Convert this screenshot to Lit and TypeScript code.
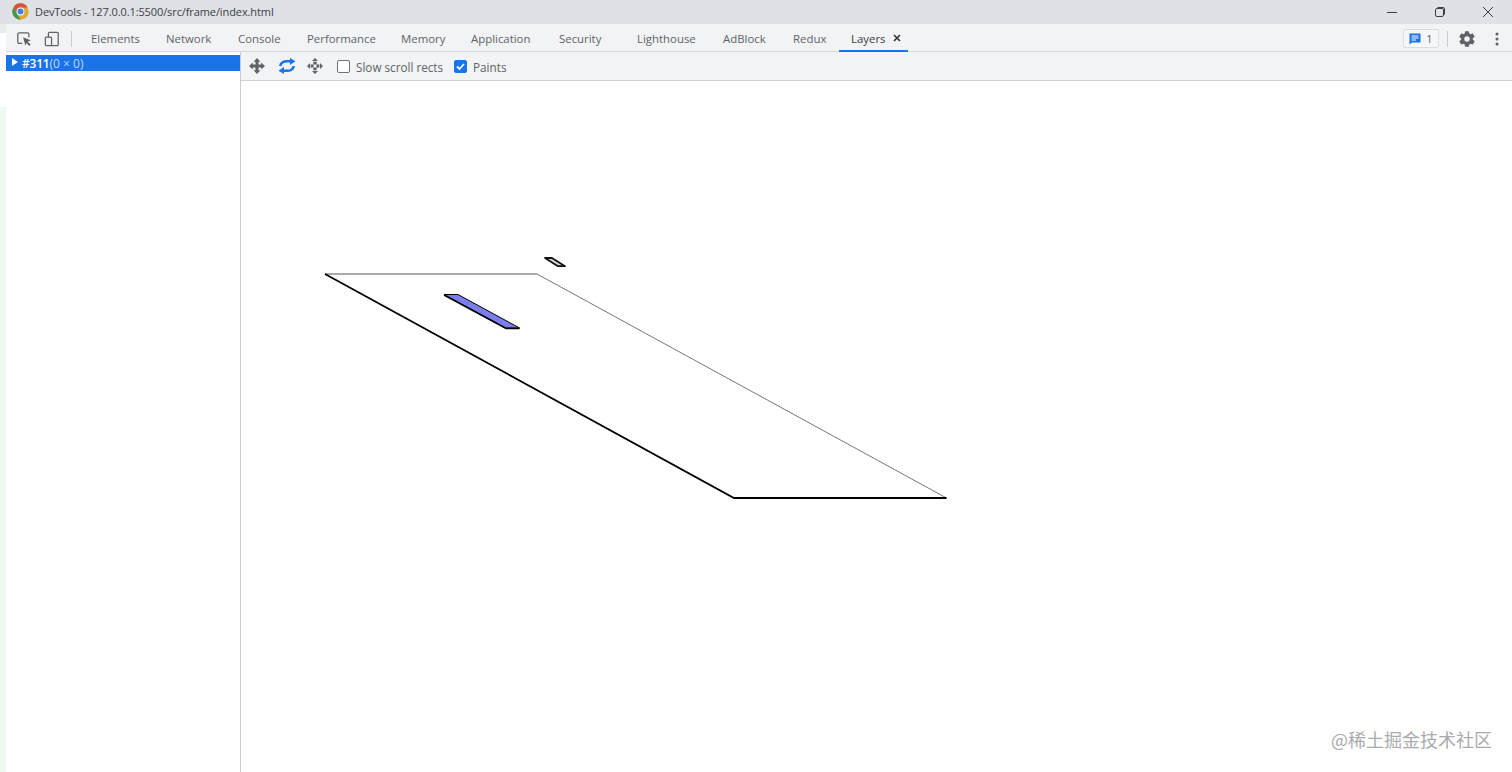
import { LitElement, html, css } from "lit";
import { customElement } from "lit/decorators.js";

type Tab = { label: string; width: number };
const TABS: Tab[] = [
  { label: "Elements", width: 75 },
  { label: "Network", width: 72 },
  { label: "Console", width: 69 },
  { label: "Performance", width: 94 },
  { label: "Memory", width: 70 },
  { label: "Application", width: 88 },
  { label: "Security", width: 78 },
  { label: "Lighthouse", width: 86 },
  { label: "AdBlock", width: 70 },
  { label: "Redux", width: 46 },
];

@customElement("app-root")
export class AppRoot extends LitElement {
  static styles = css`
    :host {
      display: block;
      width: 1512px;
      height: 772px;
      overflow: hidden;
      background: #fff;
      font-family: "Open Sans", "Noto Sans", "Liberation Sans", sans-serif;
      color: #5f6368;
      position: relative;
    }
    .title {
      height: 24px;
      background: #dee1e6;
      display: flex;
      align-items: center;
      padding-left: 12px;
      padding-bottom: 1px;
      box-sizing: border-box;
      color: #3c4043;
      font-size: 11px;
      letter-spacing: -0.1px;
    }
    .title svg.chrome { margin-right: 6px; }
    .title span { flex: 1; }
    .win { display: flex; width: 144px; height: 22px; align-items: center; }
    .win div { width: 48px; display: flex; justify-content: center; }
    .body { display: flex; height: 748px; }
    .strip { width: 6px; flex: none; display: flex; flex-direction: column; }
    .strip .a { height: 9px; background: #eaebec; }
    .strip .b { height: 74px; background: #fff; }
    .strip .c { flex: 1; background: #edfaed; }
    .main { flex: 1; display: flex; flex-direction: column; min-width: 0; }
    .tabbar {
      height: 28px;
      background: #f1f3f4;
      border-bottom: 1px solid #d6d8db;
      box-sizing: border-box;
      display: flex;
      align-items: center;
      font-size: 11.4px;
    }
    .tools { display: flex; align-items: center; width: 85px; flex: none; padding: 2px 0 0 10px; box-sizing: border-box; gap: 12px; height: 100%; }
    .tools .sep { margin-left: -1px; }
    .sep { width: 1px; height: 16px; background: #ccc; }
    .tabs { display: flex; height: 100%; flex: 1; align-items: center; }
    .tab { white-space: nowrap; padding-top: 2px; }
    .layers {
      height: 28px;
      box-sizing: border-box;
      width: 69px;
      padding: 4px 0 0 12px;
      display: flex;
      align-items: center;
      gap: 8px;
      border-bottom: 2px solid #1a73e8;
      color: #3c4043;
    }
    .layers svg { margin-top: -2px; }
    .right { display: flex; align-items: center; height: 100%; padding: 2px 13px 0 0; box-sizing: border-box; }
    .badge {
      width: 36px; height: 19px; box-sizing: border-box;
      border: 1px solid #dadce0; border-radius: 2px; background: #f4f6f7;
      display: flex; align-items: center; justify-content: center; gap: 5px;
      font-size: 11px;
    }
    .right .sep { margin: 0 11px 0 8px; }
    .right .dots { margin-left: 20px; display: flex; }
    .content { flex: 1; display: flex; min-height: 0; }
    .tree { width: 234px; flex: none; border-right: 1px solid #ccc; padding-top: 3px; }
    .row {
      height: 16px; background: #1a73e8; color: #fff;
      font-size: 12px; line-height: 16px;
      display: flex; align-items: center; padding-left: 6px;
    }
    .row svg { margin: -2px 4px 0 0; }
    .row span { display: flex; padding-top: 1px; }
    .row b { font-weight: 600; letter-spacing: -0.2px; }
    .row i { font-style: normal; color: #bcd6fa; }
    .panel { flex: 1; display: flex; flex-direction: column; min-width: 0; }
    .toolbar {
      height: 29px; background: #f1f3f4; box-sizing: border-box;
      border-bottom: 1px solid #d0d2d5;
      display: flex; align-items: center; padding-left: 8px;
      font-size: 11.7px;
    }
    .toolbar .ic { display: flex; width: 29px; }
    .toolbar .ic.pan { width: 30px; }
    .check { display: flex; align-items: center; gap: 6px; }
    .check span { padding-top: 1px; }
    .check.second { margin-left: 11px; }
    .box {
      width: 13px; height: 13px; box-sizing: border-box;
      border: 1px solid #6e7175; border-radius: 2px; background: #fff;
      display: flex; align-items: center; justify-content: center;
    }
    .box.on { background: #1a73e8; border-color: #1a73e8; }
    .canvas { flex: 1; position: relative; background: #fff; }
    .canvas svg { position: absolute; left: 0; top: 0; }
    .mark {
      position: absolute; right: 20px; bottom: 21px;
      font-family: "Noto Sans CJK SC", "Open Sans", sans-serif;
      font-size: 18px; color: #a9abad; line-height: 24px; white-space: nowrap;
    }
  `;

  render() {
    return html`
      <div class="title">
        <svg class="chrome" width="17" height="17" viewBox="0 0 48 48">
          <circle cx="24" cy="24" r="23" fill="#e0a82e" />
          <path d="M24 1A23 23 0 0 1 44 12.500L24 12.500 11 25 4 12.500A23 23 0 0 1 24 1Z" fill="#d9503f" />
          <path d="M4 12.500 14 30 24 47A23 23 0 0 1 4 12.500Z" fill="#3c9a4f" />
          <circle cx="24" cy="24" r="11" fill="#fff" />
          <circle cx="24" cy="24" r="8.500" fill="#3f80e4" />
        </svg>
        <span>DevTools - 127.0.0.1:5500/src/frame/index.html</span>
        <div class="win">
          <div><svg width="12" height="12" viewBox="0 0 12 12"><path d="M1 6.500H11" stroke="#3c4043" stroke-width="1" /></svg></div>
          <div><svg width="12" height="12" viewBox="0 0 12 12" fill="none" stroke="#3c4043"><rect x="1.500" y="2.500" width="8" height="8" rx="1.500" /><path d="M3.500 1.500H9A1.500 1.500 0 0 1 10.500 3V8.500" /></svg></div>
          <div><svg width="12" height="12" viewBox="0 0 12 12"><path d="M1 1 11 11M11 1 1 11" stroke="#3c4043" /></svg></div>
        </div>
      </div>
      <div class="body">
        <div class="strip"><div class="a"></div><div class="b"></div><div class="c"></div></div>
        <div class="main">
          <div class="tabbar">
            <div class="tools">
              <svg width="16" height="16" viewBox="0 0 18 18" fill="none">
                <path d="M7 14H3.500A1.500 1.500 0 0 1 2 12.500V3.500A1.500 1.500 0 0 1 3.500 2H13A1.500 1.500 0 0 1 14.500 3.500V7" stroke="#5f6368" stroke-width="1.400" />
                <path d="M8 7 16.500 10.500 13.200 12 16.500 15.300 15 16.800 11.800 13.500 10.500 16.500Z" fill="#5f6368" />
              </svg>
              <svg width="16" height="16" viewBox="0 0 18 18" fill="none" stroke="#5f6368" stroke-width="1.400">
                <rect x="1.500" y="7" width="7" height="9.500" rx="1" />
                <path d="M5 7V2.500A1 1 0 0 1 6 1.500H15A1 1 0 0 1 16 2.500V15.500A1 1 0 0 1 15 16.500H8.500" />
              </svg>
              <div class="sep"></div>
            </div>
            <div class="tabs">
              ${TABS.map((t) => html`<div class="tab" style="width:${t.width}px">${t.label}</div>`)}
              <div class="layers">
                <span>Layers</span>
                <svg width="8" height="8" viewBox="0 0 8 8"><path d="M1 1 7 7M7 1 1 7" stroke="#303338" stroke-width="1.600" /></svg>
              </div>
            </div>
            <div class="right">
              <div class="badge">
                <svg width="12" height="12" viewBox="0 0 12 12">
                  <path d="M0.500 0.500H11.500V9.500H3L0.500 11.500Z" fill="#1a73e8" />
                  <path d="M2.500 3H9.500M2.500 5H9.500M2.500 7H7" stroke="#fff" />
                </svg>
                <span>1</span>
              </div>
              <div class="sep"></div>
              <svg width="16" height="16" viewBox="1.800 1.800 20.400 20.400" fill="#5f6368">
                <path fill-rule="evenodd" d="M19.400 13c.04-.33.06-.66.06-1s-.02-.67-.06-1l2.100-1.640a.5.5 0 0 0 .12-.64l-2-3.460a.5.5 0 0 0-.61-.22l-2.490 1a7.300 7.300 0 0 0-1.690-.98l-.38-2.640A.5.5 0 0 0 14 2h-4a.5.5 0 0 0-.49.42l-.38 2.640c-.61.25-1.170.59-1.690.98l-2.490-1a.5.5 0 0 0-.61.22l-2 3.460a.5.5 0 0 0 .12.64L4.560 11a8 8 0 0 0 0 2l-2.100 1.640a.5.5 0 0 0-.12.64l2 3.460c.12.22.39.3.61.22l2.490-1c.52.4 1.080.73 1.690.98l.38 2.640c.04.24.25.42.49.42h4c.24 0 .45-.18.49-.42l.38-2.640c.61-.25 1.170-.59 1.690-.98l2.490 1c.22.08.49 0 .61-.22l2-3.460a.5.5 0 0 0-.12-.64zM12 15.500a3.500 3.500 0 1 1 0-7 3.500 3.500 0 0 1 0 7z" />
              </svg>
              <div class="dots">
                <svg width="4" height="16" viewBox="0 0 4 16" fill="#5f6368"><circle cx="2" cy="3" r="1.500" /><circle cx="2" cy="8" r="1.500" /><circle cx="2" cy="13" r="1.500" /></svg>
              </div>
            </div>
          </div>
          <div class="content">
            <div class="tree">
              <div class="row">
                <svg width="6" height="8" viewBox="0 0 6 8"><path d="M0 0 6 4 0 8Z" fill="#fff" /></svg>
                <span><b>#311</b><i>(0 × 0)</i></span>
              </div>
            </div>
            <div class="panel">
              <div class="toolbar">
                <div class="ic">
                  <svg width="16" height="16" viewBox="0 0 16 16" fill="#5f6368">
                    <path d="M8 0 11.400 3.800H9.500V6.500H12.200V4.600L16 8 12.200 11.400V9.500H9.500V12.200H11.400L8 16 4.600 12.200H6.500V9.500H3.800V11.400L0 8 3.800 4.600V6.500H6.500V3.800H4.600Z" />
                  </svg>
                </div>
                <div class="ic">
                  <svg width="18" height="16" viewBox="0 0 18 16" fill="none" stroke="#1a73e8" stroke-width="2.600">
                    <path d="M2.300 8C2.600 4.800 6 3.200 9 3.200H13" />
                    <path d="M15.700 8C15.400 11.200 12 12.800 9 12.800H5" />
                    <path d="M12 0 17.500 3.200 12 7Z" fill="#1a73e8" stroke="none" />
                    <path d="M6 9 0.500 12.800 6 16Z" fill="#1a73e8" stroke="none" />
                  </svg>
                </div>
                <div class="ic pan">
                  <svg width="16" height="16" viewBox="0 0 16 16" fill="#5f6368">
                    <path d="M8 0 11 3H5ZM8 16 5 13H11ZM0 8 3 5V11ZM16 8 13 11V5Z" />
                    <rect x="6.300" y="3.700" width="3.400" height="2.800" /><rect x="6.300" y="9.500" width="3.400" height="2.800" />
                    <rect x="3.700" y="6.400" width="2.800" height="3.200" /><rect x="9.500" y="6.400" width="2.800" height="3.200" />
                  </svg>
                </div>
                <div class="check"><div class="box"></div><span>Slow scroll rects</span></div>
                <div class="check second">
                  <div class="box on"><svg width="11" height="11" viewBox="0 0 11 11"><path d="M2 5.500 4.500 8 9 3" fill="none" stroke="#fff" stroke-width="1.800" /></svg></div>
                  <span>Paints</span>
                </div>
              </div>
              <div class="canvas">
                <svg width="1272" height="692" viewBox="241 81 1272 692">
                  <path d="M325 274H537" stroke="#555" stroke-width="1" fill="none" />
                  <path d="M537 274 946.500 498" stroke="#777" stroke-width="1" fill="none" />
                  <path d="M325 274 734 498H946.500" stroke="#000" stroke-width="1.800" fill="none" />
                  <path d="M444 294.500H458L519.500 328H506Z" fill="#7b7fee" stroke="#000" stroke-width="1" stroke-linejoin="round" />
                  <path d="M444 295 506 328.500H519.500" fill="none" stroke="#000" stroke-width="1.500" />
                  <path d="M545 258H552L565 266.200H558Z" fill="#d8d8d8" stroke="#111" stroke-width="1.800" stroke-linejoin="round" />
                </svg>
                <div class="mark">@稀土掘金技术社区</div>
              </div>
            </div>
          </div>
        </div>
      </div>
    `;
  }
}
